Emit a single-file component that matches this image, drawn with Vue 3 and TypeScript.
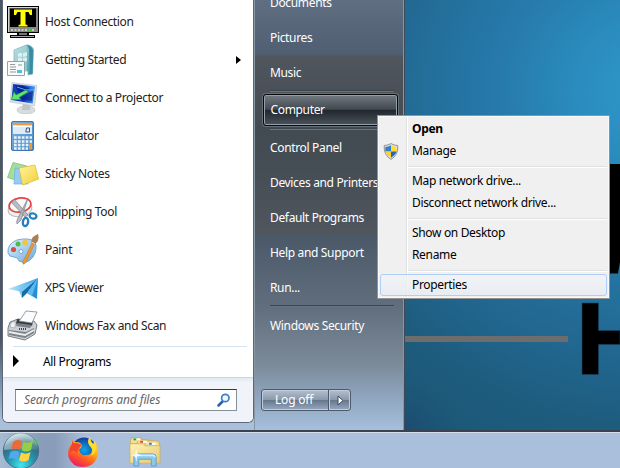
<script setup lang="ts">
interface Program { id: string; label: string; arrow?: boolean }
interface MenuItem { label: string; bold?: boolean; shield?: boolean; active?: boolean }

const programs: Program[] = [
  { id: 'host', label: 'Host Connection' },
  { id: 'start', label: 'Getting Started', arrow: true },
  { id: 'projector', label: 'Connect to a Projector' },
  { id: 'calc', label: 'Calculator' },
  { id: 'notes', label: 'Sticky Notes' },
  { id: 'snip', label: 'Snipping Tool' },
  { id: 'paint', label: 'Paint' },
  { id: 'xps', label: 'XPS Viewer' },
  { id: 'fax', label: 'Windows Fax and Scan' },
]
const placesTop: string[] = ['Documents', 'Pictures', 'Music']
const placesMid: string[] = ['Control Panel', 'Devices and Printers', 'Default Programs', 'Help and Support', 'Run...']
const groups: MenuItem[][] = [
  [{ label: 'Open', bold: true }, { label: 'Manage', shield: true }],
  [{ label: 'Map network drive...' }, { label: 'Disconnect network drive...' }],
  [{ label: 'Show on Desktop' }, { label: 'Rename' }],
  [{ label: 'Properties', active: true }],
]
</script>

<template>
  <div class="desktop">
    <svg class="wallpaper" width="620" height="432" viewBox="0 0 620 432">
      <defs>
        <radialGradient id="wp" cx="645" cy="90" r="420" gradientUnits="userSpaceOnUse">
          <stop offset="0" stop-color="#2e97c9" /><stop offset=".15" stop-color="#2b8dbf" /><stop offset=".36" stop-color="#2679aa" />
          <stop offset=".6" stop-color="#226993" /><stop offset=".8" stop-color="#1e5c7e" /><stop offset="1" stop-color="#1b5674" />
        </radialGradient>
        <radialGradient id="wpd" cx="395" cy="440" r="75" gradientUnits="userSpaceOnUse">
          <stop offset="0" stop-color="#1d466e" /><stop offset="1" stop-color="#1c5778" stop-opacity="0" />
        </radialGradient>
      </defs>
      <rect width="620" height="432" fill="url(#wp)" />
      <rect width="620" height="432" fill="url(#wpd)" />
      <path d="M600 164H620V262L618 273.500H600Z" fill="#000" />
      <path d="M582 303H598.500V330.500H620V344.500H598.500V374.500H582Z" fill="#000" stroke="#164562" stroke-width=".6" />
      <rect x="400" y="336" width="168" height="6" fill="#6e6d6e" />
    </svg>

    <main class="start">
      <section class="left">
        <ul class="programs">
          <li v-for="p in programs" :key="p.id" class="program">
            <svg class="picon" width="32" height="32" viewBox="0 0 32 32">
              <template v-if="p.id === 'host'">
                <path d="M0 0H32V27H22V29H28V32H3V29H10V27H0Z" fill="#000" />
                <path d="M1 1H31V26H1Z" fill="#868886" /><path d="M1 1H31V2H2V26H1Z" fill="#d5d5d5" />
                <path d="M3 2.500H29V21H3Z" fill="#000" />
                <path d="M7 3.500H25V9H23L21.500 6H18.500V18.500L20.500 19V20.500H11.500V19L13.500 18.500V6H10.500L9 9H7Z" fill="#ff0" />
                <path d="M4 24H28" stroke="#ddd" stroke-width="1.500" stroke-dasharray="2 1.500" /><path d="M21 24H24" stroke="#2c2" stroke-width="1.500" />
                <path d="M12 27H20V29H12Z" fill="#777" /><path d="M4 30.500H27" stroke="#aaa" />
              </template>
              <template v-else-if="p.id === 'start'">
                <defs><linearGradient id="gs" x2="1" y2="1"><stop stop-color="#dcefef" /><stop offset=".5" stop-color="#7dbbc5" /><stop offset="1" stop-color="#358fa6" /></linearGradient></defs>
                <path d="M7 6L20 .8Q26 2 26.500 6L25.500 30L21 31V27H7Z" fill="url(#gs)" stroke="#78aeb6" stroke-width=".7" />
                <path d="M20 1L22 5L23 30L25.500 29.500L26 6Q25 2 20 1Z" fill="#378da2" />
                <path d="M8 7L19 2.500L20 27H8Z" fill="#a6d4d9" opacity=".7" />
                <path d="M11 10Q13 8 15 9V13Q13 12 11 13ZM16 9Q18 9 20 7.500V12Q18 13 16 13ZM11 14Q13 13 15 14V18Q13 17 11 18ZM16 14Q18 14 20 13V17Q18 18 16 18Z" fill="#e9f7f8" opacity=".8" />
                <path d="M.5 17.500H17.500V31.500H.5Z" fill="#f7fbfb" stroke="#86a9ad" />
                <path d="M3 20.500H8M3 23H9M3 25.500H9M3 28H9" stroke="#949999" /><path d="M11 20H15V22H11Z" fill="#bdc9cc" /><path d="M10 26H15V29H10Z" fill="#5ab9dc" />
              </template>
              <template v-else-if="p.id === 'projector'">
                <defs><linearGradient id="cp"><stop stop-color="#1746b4" /><stop offset=".5" stop-color="#0c2fc4" /><stop offset="1" stop-color="#45a1f0" /></linearGradient></defs>
                <ellipse cx="19" cy="28" rx="9" ry="4" fill="#d9dbdd" stroke="#b5b9bd" stroke-width=".6" /><path d="M16 21L23 22L23 28H15Z" fill="#bec5ca" />
                <path d="M5 .5L30 3.500L27.500 24L3 20Z" fill="#dfe3e6" stroke="#bbc1c6" stroke-width=".6" />
                <path d="M6 2L28 4.500L25.700 21.500L4.500 18Z" fill="url(#cp)" />
                <path d="M8 3L23 6L13 14ZM23 10L26 9L25 19L12 17Z" fill="#061c75" opacity=".65" /><path d="M10 5Q18 9 27 8" stroke="#4aa9fa" fill="none" />
                <path d="M19 8L21 10L12 15.500L14 17.500L4.500 17.500L7 10L9 13Z" fill="#5de667" stroke="#25a334" stroke-width=".5" />
              </template>
              <template v-else-if="p.id === 'calc'">
                <defs><linearGradient id="ca" y2="1"><stop stop-color="#7eb2de" /><stop offset="1" stop-color="#4788c4" /></linearGradient></defs>
                <rect x="4.500" y="1.500" width="22" height="29" rx="1.500" fill="url(#ca)" stroke="#3f79b3" />
                <path d="M6 3H25V5H6Z" fill="#f3983b" /><path d="M6 5.500H25V14H6Z" fill="#dcebf7" /><path d="M6 5.500H25V7H6Z" fill="#fff" />
                <path d="M19.500 8H22.500V12H18.800Z" fill="none" stroke="#365c83" />
                <path d="M7 17.500H25M7 21.500H25M7 25H25M7 28.500H21" stroke="#e8f3fc" stroke-width="2.400" stroke-dasharray="2.700 1.200" />
                <path d="M22 24H25V29.500H22Z" fill="#ef9c38" />
              </template>
              <template v-else-if="p.id === 'notes'">
                <defs><linearGradient id="sn" x2="1" y2="1"><stop stop-color="#fff3a2" /><stop offset="1" stop-color="#f2cf35" /></linearGradient></defs>
                <path d="M6 4.500L20 8L15 24L.5 19.500Z" fill="#a2e099" stroke="#76ba70" stroke-width=".7" />
                <path d="M8 10L21 11L21 26L7 26Z" fill="#95caf4" stroke="#75addb" stroke-width=".7" />
                <path d="M12 10L28 7L31.500 21L15.500 27Z" fill="url(#sn)" stroke="#deb72e" stroke-width=".7" />
              </template>
              <template v-else-if="p.id === 'snip'">
                <ellipse cx="13" cy="13" rx="12" ry="7.500" transform="rotate(-10 13 13)" fill="#eef0f2" stroke="#b9b9bd" />
                <ellipse cx="13" cy="9" rx="11" ry="7" transform="rotate(-10 13 9)" fill="#fafafa" stroke="#e34644" stroke-width="1.700" />
                <path d="M7 3L21 19L18 21L5 7ZM21 2L14 24L10 28Q9 25 11 22L16 12Z" fill="#b8bdc3" stroke="#7c838a" stroke-width=".7" />
                <ellipse cx="26" cy="20" rx="3.500" ry="2.600" transform="rotate(15 26 20)" fill="#fff" stroke="#267fbd" stroke-width="2.300" />
                <ellipse cx="18.500" cy="26" rx="2.600" ry="4.200" transform="rotate(10 18.500 26)" fill="#fff" stroke="#267fbd" stroke-width="2.300" />
              </template>
              <template v-else-if="p.id === 'paint'">
                <defs><linearGradient id="pa" x2="1" y2="1"><stop stop-color="#e2f5ff" /><stop offset="1" stop-color="#6aa9d8" /></linearGradient></defs>
                <path d="M1 19Q0 10 10 6Q22 3 28 8Q31 15 26 23Q20 31 12 27Q11 23 7 23Q2 23 1 19Z" fill="url(#pa)" stroke="#76a8cc" />
                <circle cx="6.500" cy="15.500" r="2.600" fill="#e24c3e" /><circle cx="11" cy="10" r="2.500" fill="#55b84c" /><circle cx="18" cy="8.500" r="2.700" fill="#f2c53b" />
                <circle cx="14" cy="17.500" r="2" fill="#fff" stroke="#6ea6d3" />
                <path d="M25 9L27.500 10L19 28Q17 31 16 30Q15 27 18 24Z" fill="#ee9736" stroke="#c17328" stroke-width=".5" />
                <path d="M24.500 9Q23 3 31 0Q33 7 27.500 10.500Z" fill="#a97f58" /><path d="M24.500 8L28 10" stroke="#ddd" />
              </template>
              <template v-else-if="p.id === 'xps'">
                <defs><linearGradient id="xp"><stop stop-color="#bde7fb" /><stop offset="1" stop-color="#30a4e7" /></linearGradient></defs>
                <path d="M1 17L31 6L16 20Z" fill="url(#xp)" /><path d="M31 6L30 27L20 21Z" fill="#2490d6" />
                <path d="M31 6L20 21L15 26L14 20Z" fill="#176aa6" /><path d="M31 6L15 20L15 26L12 19Z" fill="#73c9f4" /><path d="M31 6L25 24L20 21Z" fill="#58baf0" />
              </template>
              <template v-else>
                <path d="M3 12L11 9L27 11L30 15L28 24L18 30L1 26L1 18Z" fill="#cdd1d5" stroke="#5d646b" stroke-width=".8" />
                <path d="M10 9L26 11L25 16L9 14Z" fill="#343a40" />
                <path d="M15 7L19 1L30 2L25 13L12 11Z" fill="#fafcfd" stroke="#7e868c" stroke-width=".8" />
                <path d="M10 13L25 15L23 18L9 16Z" fill="#78828a" />
                <path d="M2 20L19 22L27 18L27 23L18 28L2 25Z" fill="#7b838a" /><path d="M2 22L18 25L27 20" stroke="#e9ecee" stroke-width="2" fill="none" />
                <path d="M4 13L8 11L8 18L3 17Z" fill="#f3f4f5" stroke="#8a9298" stroke-width=".5" /><path d="M12 19H20" stroke="#3d444a" stroke-dasharray="1 1" stroke-width="2" />
              </template>
            </svg>
            <span>{{ p.label }}</span>
            <i v-if="p.arrow" class="tri small"></i>
          </li>
        </ul>
        <div class="all"><i class="tri"></i><span>All Programs</span></div>
        <footer class="foot">
          <div class="search">
            <span>Search programs and files</span>
            <svg width="14" height="14" viewBox="0 0 14 14"><path d="M1.500 12.500L6 8" stroke="#2b5fa8" stroke-width="2.500" stroke-linecap="round" /><circle cx="8.300" cy="5" r="3.700" fill="#eef7fd" stroke="#3e80c2" stroke-width="1.700" /></svg>
          </div>
        </footer>
      </section>

      <section class="right">
        <div class="place" v-for="p in placesTop" :key="p">{{ p }}</div>
        <hr class="sep">
        <div class="computer">Computer</div>
        <hr class="sep">
        <div class="place" v-for="p in placesMid" :key="p">{{ p }}</div>
        <hr class="sep">
        <div class="place security">Windows Security</div>
        <div class="logoff">
          <div class="off">Log off</div>
          <div class="more"><svg width="7" height="11" viewBox="0 0 7 11"><path d="M1 1L6 5.500L1 10Z" fill="#fff" stroke="#3f4a59" /></svg></div>
        </div>
      </section>
    </main>

    <nav class="taskbar">
      <svg class="orb" width="42" height="36" viewBox="0 0 42 36">
        <defs>
          <radialGradient id="orb" cx=".5" cy=".9" r=".9"><stop stop-color="#43e5ef" /><stop offset=".4" stop-color="#2595ad" /><stop offset=".75" stop-color="#38637a" /><stop offset="1" stop-color="#a6c7cf" /></radialGradient>
          <linearGradient id="orbs" y2="1"><stop stop-color="#fff" stop-opacity=".8" /><stop offset="1" stop-color="#bde1e5" stop-opacity=".12" /></linearGradient>
        </defs>
        <circle cx="21" cy="19" r="17.700" fill="url(#orb)" stroke="#44718b" />
        <path d="M4 18A17 17 0 0 1 38 18Q24 15 4 18Z" fill="url(#orbs)" />
        <path d="M33 8Q36 9 41 5Q37 10 37 15Z" fill="#50c767" opacity=".65" />
        <path d="M13 10Q17 6.500 22 9.500L20 18Q15 15 11 18Z" fill="#ed6938" />
        <path d="M23.500 10Q28 12 33 9L31 18Q26 21 21.500 18Z" fill="#95cf45" />
        <path d="M10.500 20Q15 17 19.500 20L17.500 28Q13 25 8.500 27Z" fill="#52a7ed" />
        <path d="M21 20.500Q26 23 30.500 20L28.500 28Q24 31 19 28Z" fill="#ffd244" />
      </svg>
      <svg class="fox" width="32" height="32" viewBox="0 0 32 32">
        <defs>
          <linearGradient id="ff" x1=".8" y1="0" x2=".25" y2="1"><stop stop-color="#ffe93a" /><stop offset=".4" stop-color="#ffad16" /><stop offset=".7" stop-color="#ff5528" /><stop offset="1" stop-color="#e5166d" /></linearGradient>
          <radialGradient id="fb"><stop stop-color="#07a8ee" /><stop offset="1" stop-color="#173c98" /></radialGradient>
        </defs>
        <circle cx="17" cy="14" r="12.500" fill="url(#fb)" />
        <path d="M5 4Q7 7 10 6Q13 6 15 9Q15 12 12 13Q13 20 19 19Q25 19 25 14Q26 11 22 8Q20 4 23 1Q23 5 26 8L28 5Q33 15 30 22Q26 31 16 31Q5 31 1.500 21Q0 13 4 8Z" fill="url(#ff)" />
        <path d="M5 4Q6 8 10 7L15 9L12 12L10 17Q4 12 3 18Q2 12 5 8Z" fill="#f24432" />
        <path d="M23 1Q20 5 22 9Q28 15 24 20Q30 17 29 9L26 8Q23 5 23 1Z" fill="#ffdc30" />
      </svg>
      <svg class="folder" width="33" height="30" viewBox="0 1 33 31">
        <defs><linearGradient id="fo" y2="1"><stop stop-color="#fff2b4" /><stop offset="1" stop-color="#e7ca75" /></linearGradient></defs>
        <path d="M1 5L2 2H12L14 5V8H1Z" fill="#f6df98" stroke="#ca9e46" stroke-width=".7" /><path d="M8 6L9 4H20L22 7V12H8Z" fill="#f7dc83" stroke="#ca9e46" stroke-width=".7" /><path d="M16 8L17 5H29L31 8V14H16Z" fill="#f8dd8a" stroke="#ca9e46" stroke-width=".7" />
        <path d="M4 2.500H11V4.500H4Z" fill="#fff" /><path d="M4 2.500H7V4.500H4Z" fill="#15a947" /><path d="M11 5H18V7H11Z" fill="#fff" /><path d="M11 5H14V7H11Z" fill="#d44b37" /><path d="M19 7H27V9H19Z" fill="#fff" /><path d="M20 7H23V9H20Z" fill="#1b87c8" />
        <path d="M.5 8H14L16 10H31.500V28H.5Z" fill="url(#fo)" stroke="#d0aa53" stroke-width=".7" />
        <path d="M4.500 31V22Q4.500 18.500 8 18.500H24Q27.500 18.500 27.500 22V31H22.500V24H9.500V31Z" fill="#8ac8ee" stroke="#5aa1cf" /><path d="M6 22Q6 20 8 20H24Q26 20 26 22" fill="none" stroke="#d2efff" stroke-width="2" />
        <path d="M7 13L8 18L13 20L8 21L7 27L6 21L2 20L6 18Z" fill="#fff" opacity=".8" />
      </svg>
    </nav>

    <div class="context">
      <ul v-for="(g, i) in groups" :key="i" class="group">
        <li v-for="m in g" :key="m.label" class="item" :class="{ bold: m.bold, active: m.active }">
          <span class="slot">
            <svg v-if="m.shield" width="16" height="17" viewBox="0 0 16 17">
              <path d="M8 .6Q11 2.500 14.800 2.500Q15.500 12 8 16.400Q.5 12 1.200 2.500Q5 2.500 8 .6Z" fill="#e3e5e5" stroke="#8c9293" />
              <path d="M8 2.300V8.500H2.300V4Q5.500 4 8 2.300Z" fill="#337fc8" /><path d="M8 2.300V8.500H13.700V4Q10.500 4 8 2.300Z" fill="#ffdd35" />
              <path d="M2.500 8.500H8V14.800Q3.500 12 2.500 8.500Z" fill="#fdd02c" /><path d="M13.500 8.500H8V14.800Q12.500 12 13.500 8.500Z" fill="#2865b4" />
            </svg>
          </span>
          <span>{{ m.label }}</span>
        </li>
      </ul>
    </div>
  </div>
</template>

<style>
body { margin: 0; overflow: hidden; }
</style>
<style scoped>
* { box-sizing: border-box; }
ul { list-style: none; margin: 0; padding: 0; }
.desktop { position: relative; width: 620px; height: 468px; overflow: hidden; font: 12px/16px "Noto Sans", sans-serif; letter-spacing: -.34px; color: #222; background: #a9bdd9; }
.wallpaper { position: absolute; left: 0; top: 0; }
.start { position: absolute; left: 0; top: 0; width: 405px; height: 431px; display: flex; padding-left: 2px; border-right: 1px solid #3c4b59; background: linear-gradient(#4c5764 0 340px, #7d93ac 385px, #a9bfdb 422px); }
.left { width: 252px; height: 423px; border: 1px solid #5c6875; border-top: 0; border-radius: 0 0 6px 6px; background: #fff; overflow: hidden; display: flex; flex-direction: column; }
.programs { padding-top: 3px; }
.program { height: 38px; display: flex; align-items: center; padding: 0 12px 0 4px; gap: 6px; }
.picon { flex: none; }
.program span, .all span { white-space: nowrap; }
.tri { display: block; width: 0; height: 0; border-left: 6px solid #000; border-top: 6px solid transparent; border-bottom: 6px solid transparent; }
.tri.small { border-left-width: 5px; border-top-width: 4px; border-bottom-width: 4px; margin-left: auto; }
.all { height: 31px; margin: 1px 6px 0 10px; border-top: 1px solid #d5e3f0; display: flex; align-items: center; gap: 24px; color: #000; }
.all .tri { margin-top: -2px; }
.foot { flex: 1; background: linear-gradient(#e2eaf1, #f0f4fa 5px); border-top: 1px solid #c9d6e3; padding: 11px 0 0 12px; }
.search { width: 222px; height: 22px; border: 1px solid #858f9a; border-top-color: #343b42; background: #fff; display: flex; align-items: center; justify-content: space-between; padding: 0 5px 0 8px; font-style: italic; letter-spacing: -.12px; color: #666; }
.right { width: 150px; border-left: 1px solid #8897a5; border-right: 1px solid #8596a5; border-bottom: 1px solid #b2c6dc; padding-left: 15px; color: #fff; background: linear-gradient(#5f6f81 0, #4f5e70 54px, #50565e 56px, #424a52 130px, #454d55 170px, #50565e 234px, #4b5868 236px, #626f7f 310px, #7c8b9a 365px, #91a8c2 400px, #a8bfdb 430px); }
.place { height: 35px; line-height: 35px; white-space: nowrap; }
.place:first-child { margin-top: -15px; }
.sep { border: 0; border-top: 1px solid #3a444d; border-bottom: 1px solid #697580; width: 124px; height: 2px; margin: 0; }
.computer { width: 135px; height: 32px; margin: 2px 0 2px -7px; padding-left: 6.5px; line-height: 30px; border: 1px solid #080a0c; border-radius: 3px; background: linear-gradient(#747a82, #424850 48%, #20262d 50%, #4b525a); box-shadow: inset 0 0 0 1px #969ea6, 0 0 0 1px #66707a; }
.security { margin-top: 1px; }
.logoff { display: flex; width: 90px; height: 22px; margin: 46px 0 0 -9px; border: 1px solid #4e5a69; border-radius: 3px; background: linear-gradient(#b5c0cf, #8b99ac 48%, #65758a 50%, #96a9c3); box-shadow: inset 0 0 0 1px #bfccdb; }
.off { width: 67px; padding-left: 13px; line-height: 20px; border-right: 1px solid #4e5a69; letter-spacing: -.2px; }
.more { flex: 1; display: flex; align-items: center; justify-content: center; border-left: 1px solid #bfccdb; }
.more svg { flex: none; }
.taskbar { position: absolute; left: 0; top: 430px; width: 620px; height: 38px; border-top: 2px solid #3b424d; box-shadow: inset 0 1px #d6deea; display: flex; align-items: flex-start; background: linear-gradient(90deg, #a5bbd3, #899cba 42px, #899cba 55px, #a9bfdb 85px); }
.orb { flex: none; }
.fox { margin: 4px 0 0 25px; }
.folder { margin: 5px 0 0 30px; }
.context { position: absolute; left: 377px; top: 115px; width: 233px; height: 184px; border: 1px solid #929292; padding: 2px; background: linear-gradient(90deg, #f0f0f0 28px, #e0e0e0 28px 29px, #fff 29px 30px, #f0f0f0 30px); box-shadow: inset 0 0 0 1px #f8f8f8; color: #000; }
.group + .group { margin-top: 3px; padding-top: 5px; background: linear-gradient(#e0e0e0 0 1px, #fff 1px 2px, transparent 2px) 28px 1px / 199px 3px no-repeat; }
.item { display: flex; align-items: center; height: 22px; white-space: nowrap; }
.slot { width: 32px; height: 17px; padding-left: 3px; flex: none; }
.item.bold { font-weight: 700; }
.item.active { border: 1px solid #aecff7; border-radius: 3px; background: linear-gradient(#f2f4f8cc, #e7ebf2cc); }
.item.active .slot { width: 31px; }
</style>
